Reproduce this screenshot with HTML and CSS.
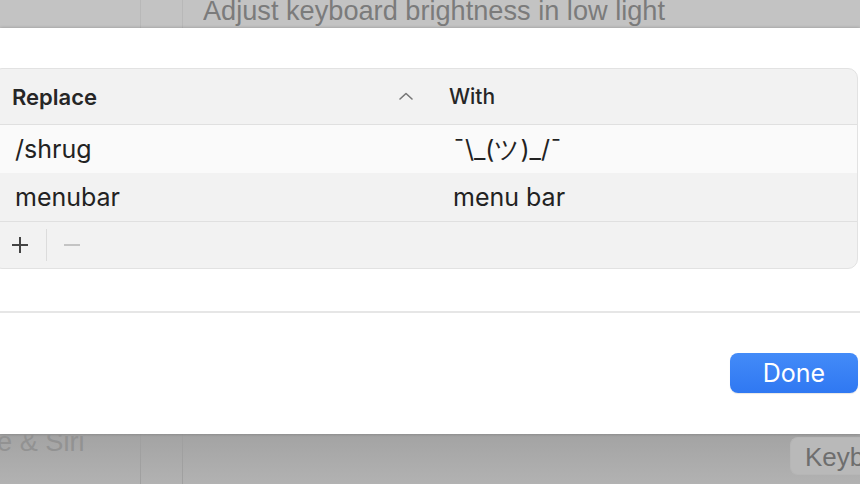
FILE: index.html
```html
<!DOCTYPE html>
<html lang="en">
<head>
  <meta charset="UTF-8" />
  <title>Text Replacements</title>
  <link rel="stylesheet" href="styles.css">
</head>
<body>

  <!-- Fondo: ventana de preferencias detrás de la hoja -->
  <div class="backdrop backdrop-top">
    <div class="side-col"></div>
    <div class="mid-col"></div>
    <div class="main-col">
      <span class="backdrop-text">Adjust keyboard brightness in low light</span>
    </div>
  </div>

  <!-- Hoja de reemplazos -->
  <div class="sheet">
    <div class="panel">
      <div class="panel-head">
        <div class="cell head-replace">
          <span>Replace</span>
          <svg class="chevron" width="16" height="10" viewBox="0 0 16 10">
            <path d="M2 8 L8 2.5 L14 8" fill="none" stroke="#777" stroke-width="1.6" stroke-linecap="round" stroke-linejoin="round"/>
          </svg>
        </div>
        <div class="cell head-with">With</div>
      </div>
      <div class="row row-light">
        <div class="cell">/shrug</div>
        <div class="cell">¯\_(ツ)_/¯</div>
      </div>
      <div class="row">
        <div class="cell">menubar</div>
        <div class="cell">menu bar</div>
      </div>
      <div class="panel-foot">
        <button class="tool-btn">
          <svg width="20" height="20" viewBox="0 0 20 20">
            <path d="M10 2 V18 M2 10 H18" stroke="#444" stroke-width="2"/>
          </svg>
        </button>
        <span class="tool-sep"></span>
        <button class="tool-btn">
          <svg width="20" height="20" viewBox="0 0 20 20">
            <path d="M2 10 H18" stroke="#c4c4c4" stroke-width="2"/>
          </svg>
        </button>
      </div>
    </div>

    <div class="sheet-rule"></div>

    <div class="sheet-actions">
      <button class="btn-done">Done</button>
    </div>
  </div>

  <div class="backdrop backdrop-bottom">
    <div class="side-col"><span class="backdrop-text side-text">e &amp; Siri</span></div>
    <div class="mid-col"></div>
    <div class="main-col bottom-main">
      <span class="keyb-btn">Keyb</span>
    </div>
  </div>

</body>
</html>
```

FILE: styles.css
```css
body {
  margin: 0;
  width: 860px;
  height: 484px;
  overflow: hidden;
  font-family: Inter, "Liberation Sans", sans-serif;
  background: #b0b0b0;
  color: #222;
}

/* Fondo gris */
.backdrop {
  display: flex;
  overflow: hidden;
}
.backdrop-top {
  height: 28px;
  background: #c3c3c3;
}
.backdrop-bottom {
  height: 50px;
  background: linear-gradient(#a3a3a3, #b2b2b2);
}
.side-col {
  width: 140px;
  border-right: 1px solid #b8b8b8;
  overflow: hidden;
  white-space: nowrap;
}
.mid-col {
  width: 41px;
  border-right: 1px solid #b8b8b8;
}
.backdrop-bottom .side-col,
.backdrop-bottom .mid-col {
  border-right-color: #a0a0a0;
}
.main-col {
  flex: 1;
  overflow: hidden;
  white-space: nowrap;
}
.backdrop-text {
  font-family: "Liberation Sans", sans-serif;
  font-size: 28px;
  line-height: 32px;
  color: #7b7b7b;
  display: inline-block;
  transform: scaleX(0.97);
  transform-origin: left center;
}
.backdrop-top .backdrop-text {
  margin: -5px 0 0 20px;
}
.side-text {
  margin: -8px 0 0 -3px;
  color: #929292;
}
.bottom-main {
  display: flex;
  justify-content: flex-end;
}
.keyb-btn {
  margin-top: 3px;
  height: 38px;
  padding: 0 0 0 14px;
  width: 70px;
  box-sizing: border-box;
  border: 1px solid #b6b6b6;
  border-right: none;
  border-radius: 8px 0 0 8px;
  background: #b9b9b9;
  font-family: "Liberation Sans", sans-serif;
  font-size: 26px;
  line-height: 38px;
  color: #6e6e6e;
  overflow: hidden;
  white-space: nowrap;
}

/* Hoja */
.sheet {
  height: 406px;
  background: #fff;
  box-shadow: 0 0 3px rgba(0, 0, 0, 0.25);
  position: relative;
  display: flex;
  flex-direction: column;
}

.panel {
  margin: 40px 2px 0 -8px;
  border: 1px solid #e2e2e2;
  border-radius: 10px;
  background: #f2f2f2;
  overflow: hidden;
}
.panel-head, .row {
  display: grid;
  grid-template-columns: 441px 1fr;
}
.panel-head {
  height: 55px;
  align-items: center;
  border-bottom: 1px solid #e0e0e0;
  font-weight: 600;
  font-size: 22px;
  color: #262626;
}
.head-replace {
  display: flex;
  align-items: center;
  justify-content: space-between;
  padding: 0 20px 0 19px;
}
.head-with {
  font-weight: 500;
  padding-left: 15px;
  font-size: 21px;
}
.chevron {
  margin-top: -2px;
}
.row {
  height: 48px;
  align-items: center;
  font-size: 25px;
}
.row .cell {
  padding-left: 22px;
}
.row .cell + .cell {
  padding-left: 19px;
}
.row-light {
  background: #fafafa;
}
.row + .panel-foot {
  border-top: 1px solid #e0e0e0;
}
.panel-foot {
  height: 46px;
  display: flex;
  align-items: center;
  padding-left: 17px;
}
.tool-btn {
  border: none;
  background: none;
  padding: 0;
  width: 20px;
  height: 20px;
  display: flex;
}
.tool-sep {
  width: 1px;
  height: 32px;
  background: #dcdcdc;
  margin: 0 15px 0 16px;
}

.sheet-rule {
  margin-top: 42px;
  height: 2px;
  background: #e6e6e6;
}

.sheet-actions {
  display: flex;
  justify-content: flex-end;
  padding: 40px 2px 0 0;
}
.btn-done {
  width: 128px;
  height: 40px;
  border: none;
  border-radius: 8px;
  background: linear-gradient(#438bf8, #2f78f2);
  color: #fff;
  font-family: Inter, "Liberation Sans", sans-serif;
  font-size: 25px;
  cursor: pointer;
  box-shadow: 0 1px 1px rgba(0, 0, 0, 0.1);
}
```
